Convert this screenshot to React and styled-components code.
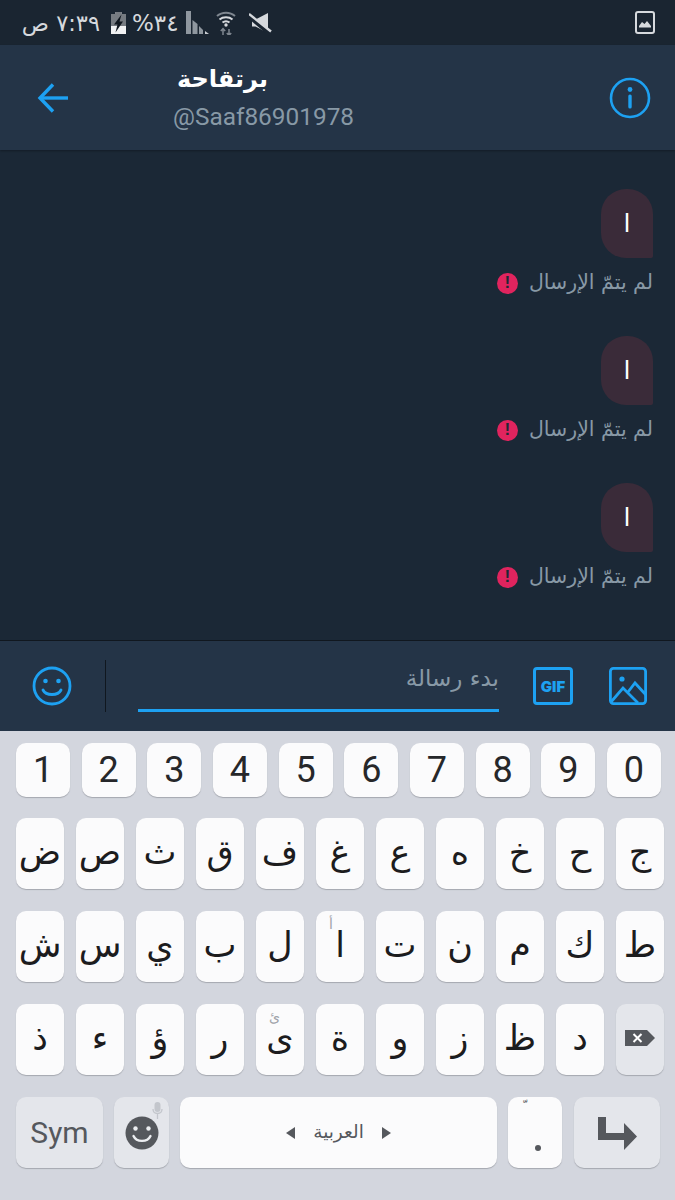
import React from 'react';
import styled, { createGlobalStyle } from 'styled-components';

const GlobalStyle = createGlobalStyle`
  html, body {
    margin: 0;
    padding: 0;
    background: #1b2836;
  }
  * {
    box-sizing: border-box;
  }
`;

const ROW_ONE = ['ج', 'ح', 'خ', 'ه', 'ع', 'غ', 'ف', 'ق', 'ث', 'ص', 'ض'].reverse();
const ROW_TWO = ['ط', 'ك', 'م', 'ن', 'ت', 'ا', 'ل', 'ب', 'ي', 'س', 'ش'].reverse();
const ROW_THREE = ['د', 'ظ', 'ز', 'و', 'ة', 'ى', 'ر', 'ؤ', 'ء', 'ذ'].reverse();
const NUMBERS = ['1', '2', '3', '4', '5', '6', '7', '8', '9', '0'];
const HINTS = { 'ا': 'أ', 'ى': 'ئ' };

const App = () => {
    return (
        <Screen>
            <GlobalStyle />
            <StatusBar>
                <StatusLeft>
                    <Clock dir="rtl">٧:٣٩ ص</Clock>
                    <BatteryIcon />
                    <Percent>%٣٤</Percent>
                    <SignalIcon />
                    <WifiIcon />
                    <MuteIcon />
                </StatusLeft>
                <GalleryIcon />
            </StatusBar>

            <Header>
                <BackIcon />
                <TitleBlock>
                    <Name dir="rtl">برتقاحة</Name>
                    <Handle>@Saaf86901978</Handle>
                </TitleBlock>
                <InfoIcon />
            </Header>

            <Chat>
                {[0, 1, 2].map((i) => (
                    <Message key={i}>
                        <Bubble>ا</Bubble>
                        <Failed>
                            <ErrorDot>!</ErrorDot>
                            <FailedText dir="rtl">لم يتمّ الإرسال</FailedText>
                        </Failed>
                    </Message>
                ))}
            </Chat>

            <Composer>
                <SmileIcon />
                <Divider />
                <Input dir="rtl">بدء رسالة</Input>
                <GifBox>GIF</GifBox>
                <ImageIcon />
            </Composer>

            <Keyboard>
                <NumberRow>
                    {NUMBERS.map((n) => (
                        <NumberKey key={n}>{n}</NumberKey>
                    ))}
                </NumberRow>
                <LetterRow>
                    {ROW_ONE.map((l) => (
                        <LetterKey key={l}>{l}</LetterKey>
                    ))}
                </LetterRow>
                <LetterRow>
                    {ROW_TWO.map((l) => (
                        <LetterKey key={l}>
                            {HINTS[l] && <Hint>{HINTS[l]}</Hint>}
                            {l}
                        </LetterKey>
                    ))}
                </LetterRow>
                <LetterRow>
                    {ROW_THREE.map((l) => (
                        <LetterKey key={l}>
                            {HINTS[l] && <Hint>{HINTS[l]}</Hint>}
                            {l}
                        </LetterKey>
                    ))}
                    <LetterKey $dim>
                        <BackspaceIcon />
                    </LetterKey>
                </LetterRow>
                <BottomRow>
                    <BottomKey $w={87} $dim>Sym</BottomKey>
                    <BottomKey $w={55} $dim>
                        <MicIcon />
                        <KeySmileIcon />
                    </BottomKey>
                    <SpaceKey $w={317}>
                        <ArrowLeft />
                        <SpaceLabel dir="rtl">العربية</SpaceLabel>
                        <ArrowRight />
                    </SpaceKey>
                    <BottomKey $w={54}>
                        <TinyHint>{'\u00a0ّ'}</TinyHint>
                        <DotMark />
                    </BottomKey>
                    <EnterKey $w={86} $dim>
                        <EnterIcon />
                    </EnterKey>
                </BottomRow>
            </Keyboard>
        </Screen>
    );
};

export default App;

/* icons */

const BatteryIcon = () => (
    <svg width="15" height="22" viewBox="0 0 15 22">
        <path d="M4.500 0h6v2H15v20H0V2h4.500z" fill="#f1f2f3" />
        <path d="M4.500 0h6v2H15v12H0V2h4.500z" fill="#767b81" />
        <path d="M10.500 2.500 3 12.500h3.500L4.500 20.500 12 9.500H8.500z" fill="#10171f" />
    </svg>
);

const SignalIcon = () => (
    <svg width="23" height="23" viewBox="0 0 23 23">
        <path d="M0 0h5v23H0z" fill="#8f979f" />
        <path d="M6.500 9l5 4v10h-5z" fill="#8f979f" />
        <path d="M13 15l4 4v4h-4z" fill="#8f979f" />
        <path d="M19 20l4 3h-4z" fill="#c9cdd2" />
    </svg>
);

const WifiIcon = () => (
    <svg width="20" height="24" viewBox="0 0 20 24" fill="none">
        <path d="M1 5c5-4.500 13-4.500 18 0" stroke="#7f8790" strokeWidth="2" />
        <path d="M3.500 8.500c3.500-3 9.500-3 13 0" stroke="#d6d9dd" strokeWidth="2" />
        <path d="M6.500 11.500c2-1.500 5-1.500 7 0" stroke="#d6d9dd" strokeWidth="2" />
        <circle cx="10" cy="14" r="1.700" fill="#d6d9dd" />
        <path d="M7 18v6M4.800 20 7 17.600 9.200 20M13 24v-6M10.800 22l2.200 2.400 2.200-2.400" stroke="#7f8790" strokeWidth="1.500" />
    </svg>
);

const MuteIcon = () => (
    <svg width="23" height="20" viewBox="0 0 23 20">
        <path d="M3 6.500h3.500L19 0v20L6.500 13.500H3z" fill="#d6d9dd" />
        <path d="M0 3 20 20" stroke="#1a2531" strokeWidth="4.500" />
        <path d="M0 1 22 18.500" stroke="#d6d9dd" strokeWidth="2.400" />
    </svg>
);

const GalleryIcon = () => (
    <svg width="20" height="23" viewBox="0 0 20 23">
        <rect x="1" y="1" width="18" height="21" rx="2" fill="#1a2531" stroke="#d6d9dd" strokeWidth="2" />
        <path d="M4 15l3-4 2.500 2 2.500-3 4 5z" fill="#d6d9dd" />
        <rect x="4" y="15" width="12" height="1.500" fill="#d6d9dd" />
    </svg>
);

const BackIcon = () => (
    <svg width="32" height="32" viewBox="0 0 32 32" fill="none" stroke="#1da1f2" strokeWidth="3.400">
        <path d="M31 16H3" />
        <path d="M16 2.500 3 16l13 13.500" />
    </svg>
);

const InfoIcon = () => (
    <svg width="42" height="42" viewBox="0 0 42 42" fill="none">
        <circle cx="21" cy="21" r="19" stroke="#1da1f2" strokeWidth="2.600" />
        <circle cx="21" cy="12.500" r="2.400" fill="#1da1f2" />
        <rect x="19.300" y="17.500" width="3.400" height="14" rx="1.500" fill="#1da1f2" />
    </svg>
);

const SmileIcon = () => (
    <svg width="40" height="40" viewBox="0 0 40 40" fill="none">
        <circle cx="20" cy="20" r="18" stroke="#1da1f2" strokeWidth="2.800" />
        <circle cx="13.500" cy="15" r="2.300" fill="#1da1f2" />
        <circle cx="26.500" cy="15" r="2.300" fill="#1da1f2" />
        <path d="M11 24c3 6 15 6 18 0" stroke="#1da1f2" strokeWidth="2.800" strokeLinecap="round" />
    </svg>
);

const ImageIcon = () => (
    <svg width="38" height="38" viewBox="0 0 38 38" fill="none" stroke="#1da1f2" strokeWidth="2.800">
        <rect x="1.400" y="1.400" width="35.200" height="35.200" rx="3" />
        <circle cx="13" cy="12" r="2.600" fill="#1da1f2" stroke="none" />
        <path d="M2 35 14 21l15 15" />
        <path d="M19 25l7-9 11 12" />
    </svg>
);

const BackspaceIcon = () => (
    <svg width="30" height="16" viewBox="0 0 30 16">
        <path d="M0 0h22l8 8-8 8H0z" fill="#55585d" />
        <path d="M8.500 4l8 8M16.500 4l-8 8" stroke="#fff" strokeWidth="2" />
    </svg>
);

const KeySmileIcon = () => (
    <svg width="34" height="34" viewBox="0 0 34 34">
        <circle cx="17" cy="17" r="16.500" fill="#55585d" />
        <circle cx="10.500" cy="12.500" r="2.200" fill="#eceef1" />
        <circle cx="23.500" cy="12.500" r="2.200" fill="#eceef1" />
        <path d="M8.500 20c3 6.500 14 6.500 17 0" fill="none" stroke="#eceef1" strokeWidth="2.400" strokeLinecap="round" />
    </svg>
);

const EnterIcon = () => (
    <svg width="39" height="33" viewBox="0 0 39 33">
        <path d="M0 0h8v16h18V6l13 13.500L26 33V23H0z" fill="#55585d" />
    </svg>
);

const ArrowLeft = () => (
    <svg width="9" height="12" viewBox="0 0 9 12">
        <path d="M9 0v12L0 6z" fill="#55585d" />
    </svg>
);

const ArrowRight = () => (
    <svg width="9" height="12" viewBox="0 0 9 12">
        <path d="M0 0v12l9-6z" fill="#55585d" />
    </svg>
);

const MicSvg = styled.svg`
  position: absolute;
  top: 5px;
  right: 6px;
`;

const MicIcon = () => (
    <MicSvg width="11" height="17" viewBox="0 0 11 17">
        <rect x="2.500" y="0" width="6" height="10" rx="3" fill="#c3c6cc" />
        <path d="M1 7c0 6 9 6 9 0M5.500 12v5" fill="none" stroke="#c3c6cc" strokeWidth="1.300" />
    </MicSvg>
);

/* layout */

const Screen = styled.div`
  width: 675px;
  height: 1200px;
  overflow: hidden;
  display: flex;
  flex-direction: column;
  background: #1b2836;
  font-family: "DejaVu Sans", "Noto Sans", sans-serif;
`;

const StatusBar = styled.div`
  height: 45px;
  flex-shrink: 0;
  display: flex;
  align-items: center;
  justify-content: space-between;
  padding: 0 20px 0 22px;
  background: #1a2531;
  color: #d6d9dd;
`;

const StatusLeft = styled.div`
  display: flex;
  align-items: center;

  & > svg:nth-of-type(2) {
    margin-right: 7px;
  }

  & > svg:nth-of-type(3) {
    margin-right: 13px;
  }
`;

const Clock = styled.span`
  width: 78px;
  margin-right: 11px;
  font-size: 22.5px;
  line-height: 24px;
  white-space: nowrap;
`;

const Percent = styled.span`
  width: 44px;
  margin: 0 10px 0 6px;
  font-size: 23px;
  line-height: 24px;
  text-align: center;
  white-space: nowrap;
`;

const Header = styled.div`
  height: 105px;
  flex-shrink: 0;
  display: flex;
  align-items: center;
  padding: 0 24px 0 37px;
  background: #243447;
  box-shadow: 0 1px 2px rgba(0, 0, 0, 0.3);
  z-index: 1;
`;

const TitleBlock = styled.div`
  flex: 1;
  display: flex;
  flex-direction: column;
  align-items: flex-start;
  padding: 0 0 4px 104px;
`;

const Name = styled.div`
  width: 95px;
  height: 36px;
  color: #fff;
  font-size: 24px;
  font-weight: 700;
  line-height: 36px;
  white-space: nowrap;
`;

const Handle = styled.div`
  margin-top: 6px;
  color: #8899a6;
  font-family: Roboto, sans-serif;
  font-size: 24.4px;
  line-height: 28px;
  white-space: nowrap;
`;

const Chat = styled.div`
  height: 490px;
  flex-shrink: 0;
  padding: 39px 22px 0 0;
  display: flex;
  flex-direction: column;
  align-items: flex-end;
  gap: 38px;
  background: #1b2836;
`;

const Message = styled.div`
  display: flex;
  flex-direction: column;
  align-items: flex-end;
`;

const Bubble = styled.div`
  width: 52px;
  height: 69px;
  display: flex;
  align-items: center;
  justify-content: center;
  border-radius: 25px 25px 2px 25px;
  background: #3a2b39;
  color: #fff;
  font-size: 25px;
`;

const Failed = styled.div`
  margin-top: 10px;
  height: 30px;
  display: flex;
  align-items: center;
  gap: 11px;
`;

const ErrorDot = styled.div`
  width: 21px;
  height: 21px;
  display: flex;
  align-items: center;
  justify-content: center;
  border-radius: 50%;
  background: #e0245e;
  color: #1b2836;
  font-family: "Liberation Sans", sans-serif;
  font-size: 17px;
  font-weight: 700;
`;

const FailedText = styled.div`
  margin-bottom: 2px;
  color: #8899a6;
  font-size: 20.5px;
  line-height: 30px;
  white-space: nowrap;
`;

const Composer = styled.div`
  height: 91px;
  flex-shrink: 0;
  display: flex;
  align-items: center;
  padding: 0 28px 0 32px;
  background: #243447;
  border-top: 1px solid #10171f;
`;

const Divider = styled.div`
  width: 1px;
  height: 52px;
  margin: 0 32px 0 33px;
  background: #10171f;
`;

const Input = styled.div`
  width: 361px;
  height: 52px;
  border-bottom: 3px solid #1da1f2;
  color: #8899a6;
  font-size: 23px;
  line-height: 36px;
`;

const GifBox = styled.div`
  width: 40px;
  height: 38px;
  margin: 0 36px 0 34px;
  display: flex;
  align-items: center;
  justify-content: center;
  border: 3px solid #1da1f2;
  border-radius: 4px;
  color: #1da1f2;
  font-family: Inter, "Liberation Sans", sans-serif;
  font-size: 15px;
  font-weight: 900;
`;

const Keyboard = styled.div`
  flex: 1;
  display: flex;
  flex-direction: column;
  padding: 12px 11px 0 16px;
  background: #d3d6de;
`;

const NumberRow = styled.div`
  display: flex;
  gap: 11.67px;
  height: 54px;
  margin-bottom: 21px;
`;

const LetterRow = styled.div`
  display: flex;
  gap: 12px;
  height: 71px;
  margin-bottom: 22px;
`;

const BottomRow = styled.div`
  display: flex;
  gap: 11px;
  height: 71px;
`;

const BaseKey = styled.div`
  position: relative;
  display: flex;
  align-items: center;
  justify-content: center;
  border-radius: 10px;
  background: ${(p) => (p.$dim ? '#e4e6eb' : '#fbfbfc')};
  box-shadow: 0 1px 1px #a5a8b0;
  color: #1c1c1e;
`;

const NumberKey = styled(BaseKey)`
  width: 54px;
  font-family: Roboto, sans-serif;
  font-size: 36px;
  color: #26272a;
`;

const LetterKey = styled(BaseKey)`
  width: 48px;
  font-size: 35px;
  padding-bottom: 4px;
`;

const BottomKey = styled(BaseKey)`
  width: ${(p) => p.$w}px;
  color: #55585d;
  font-family: Roboto, sans-serif;
  font-size: 30px;
`;

const EnterKey = styled(BottomKey)`
  margin-left: 1px;
  padding-top: 1px;
`;

const SpaceKey = styled(BottomKey)`
  gap: 18px;
`;

const SpaceLabel = styled.span`
  margin-bottom: 3px;
  color: #55585d;
  font-family: "DejaVu Sans", sans-serif;
  font-size: 18.5px;
`;

const Hint = styled.span`
  position: absolute;
  top: 6px;
  left: 13px;
  color: #a0a3aa;
  font-size: 14px;
  line-height: 14px;
`;

const TinyHint = styled.span`
  position: absolute;
  top: 2px;
  left: 14px;
  color: #55585d;
  font-family: "DejaVu Sans", sans-serif;
  font-size: 13px;
`;

const DotMark = styled.span`
  position: absolute;
  left: 27px;
  bottom: 17px;
  width: 6px;
  height: 6px;
  border-radius: 50%;
  background: #55585d;
`;
